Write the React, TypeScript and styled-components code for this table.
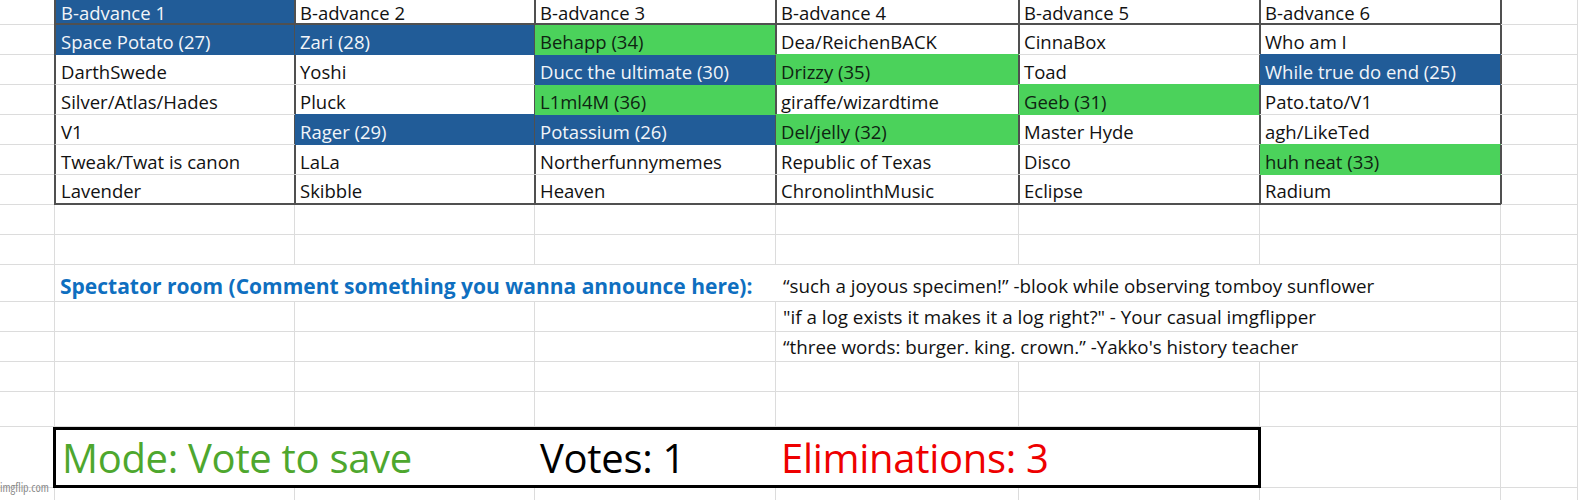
import React from "react";
import styled, { createGlobalStyle } from "styled-components";

const GlobalStyle = createGlobalStyle`
	html, body {
		margin: 0;
		padding: 0;
		background: #ffffff;
		overflow: hidden;
	}
	body {
		font-family: "Open Sans", "Noto Sans", sans-serif;
	}
`;

const BLUE = "#215c98";
const GREEN = "#4bd25b";
const GRID = "#dcdcdc";
const EDGE = "#505050";

type Fill = "b" | "g" | undefined;

const fillColor = (f: Fill) => (f === "b" ? BLUE : f === "g" ? GREEN : undefined);

const Page = styled.div`
	position: relative;
	width: 1578px;
	height: 500px;
	overflow: hidden;
`;

const Sheet = styled.div`
	display: grid;
	grid-template-columns: 55px 240px 240px 241px 243px 241px 241px 1fr;
	grid-template-rows: repeat(9, 30px) 37px 30px 30px 30px 35px 61px 30px;
	margin-top: -5px;
`;

const Cell = styled.div<{ $span?: number }>`
	box-sizing: border-box;
	grid-column: span ${p => p.$span ?? 1};
	border-right: 1px solid ${GRID};
	border-bottom: 1px solid ${GRID};
`;

const TableCell = styled.div<{ $fill: Fill; $below: Fill; $head: boolean; $last: boolean; $first: boolean }>`
	box-sizing: border-box;
	display: flex;
	align-items: center;
	padding: ${p => (p.$head ? "6px" : "3px")} 0 0 5px;
	font-size: 18.5px;
	line-height: 21px;
	white-space: nowrap;
	overflow: hidden;
	background: ${p => fillColor(p.$fill) ?? "transparent"};
	color: ${p => (p.$fill === "b" ? "#f2f5f9" : p.$fill === "g" ? "#0f2412" : "#111")};
	border-right: 2px solid ${EDGE};
	border-left: ${p => (p.$first ? `2px solid ${EDGE}` : "none")};
	margin-left: ${p => (p.$first ? "-1px" : "0")};
	border-bottom: ${p =>
		p.$head || p.$last
			? `2px solid ${EDGE}`
			: `1px solid ${fillColor(p.$fill) ?? fillColor(p.$below) ?? GRID}`};
	margin-right: -1px;
`;

const SpectatorCell = styled(Cell)`
	display: flex;
	align-items: flex-end;
	padding: 0 0 1px 5px;
	border-right: none;
	white-space: nowrap;
	color: #0f6fc0;
	font-weight: 700;
	font-size: 21px;
`;

const QuoteCell = styled(Cell)<{ $tall?: boolean }>`
	display: flex;
	align-items: flex-end;
	padding: 0 0 ${p => (p.$tall ? "2px" : "1px")} 7px;
	white-space: nowrap;
	color: #111;
	font-size: 18.8px;
`;

const StatusBox = styled.div`
	grid-column: span 5;
	box-sizing: border-box;
	margin: 0 -1px 0 -2px;
	border: 3px solid #000;
	display: grid;
	grid-template-columns: 238px 240px 241px 1fr;
	align-items: center;
	font-size: 40px;
	letter-spacing: -0.3px;
	background: #fff;
	position: relative;
	z-index: 1;
`;

const Stat = styled.div<{ $color: string; $col: number }>`
	grid-column: ${p => p.$col};
	color: ${p => p.$color};
	padding-left: 6px;
	white-space: nowrap;
`;

const Watermark = styled.div`
	position: absolute;
	left: 0;
	bottom: 4px;
	font-stretch: 75%;
	font-size: 12px;
	color: #8a8a8a;
	z-index: 2;
`;

const rows: [string, Fill][][] = [
	[["B-advance 1", "b"], ["B-advance 2", undefined], ["B-advance 3", undefined], ["B-advance 4", undefined], ["B-advance 5", undefined], ["B-advance 6", undefined]],
	[["Space Potato (27)", "b"], ["Zari (28)", "b"], ["Behapp (34)", "g"], ["Dea/ReichenBACK", undefined], ["CinnaBox", undefined], ["Who am I", undefined]],
	[["DarthSwede", undefined], ["Yoshi", undefined], ["Ducc the ultimate (30)", "b"], ["Drizzy (35)", "g"], ["Toad", undefined], ["While true do end (25)", "b"]],
	[["Silver/Atlas/Hades", undefined], ["Pluck", undefined], ["L1ml4M (36)", "g"], ["giraffe/wizardtime", undefined], ["Geeb (31)", "g"], ["Pato.tato/V1", undefined]],
	[["V1", undefined], ["Rager (29)", "b"], ["Potassium (26)", "b"], ["Del/jelly (32)", "g"], ["Master Hyde", undefined], ["agh/LikeTed", undefined]],
	[["Tweak/Twat is canon", undefined], ["LaLa", undefined], ["Northerfunnymemes", undefined], ["Republic of Texas", undefined], ["Disco", undefined], ["huh neat (33)", "g"]],
	[["Lavender", undefined], ["Skibble", undefined], ["Heaven", undefined], ["ChronolinthMusic", undefined], ["Eclipse", undefined], ["Radium", undefined]],
];

const quotes = [
	"\u201csuch a joyous specimen!\u201d -blook while observing tomboy sunflower",
	"\"if a log exists it makes it a log right?\" - Your casual imgflipper",
	"\u201cthree words: burger. king. crown.\u201d -Yakko's history teacher",
];

function blankRow(key: string) {
	return Array.from({ length: 8 }, (_, i) => <Cell key={key + i} />);
}

export default function App() {
	const cells: React.ReactNode[] = [];

	rows.forEach((row, r) => {
		cells.push(<Cell key={`t${r}-0`} />);
		row.forEach(([text, fill], c) => (
			cells.push(
				<TableCell
					key={`t${r}-${c + 1}`}
					$fill={fill}
					$below={rows[r + 1]?.[c]?.[1]}
					$head={r === 0}
					$last={r === rows.length - 1}
					$first={c === 0}
				>
					{text}
				</TableCell>
			)
		));
		cells.push(<Cell key={`t${r}-7`} />);
	});

	cells.push(...blankRow("e1-"), ...blankRow("e2-"));

	// spectator row, first quote alongside it
	cells.push(
		<Cell key="s0" />,
		<SpectatorCell key="s1" $span={3}>Spectator room (Comment something you wanna announce here):</SpectatorCell>,
		<QuoteCell key="s4" $span={3} $tall>{quotes[0]}</QuoteCell>,
		<Cell key="s7" />
	);

	quotes.slice(1).forEach((q, i) => {
		cells.push(
			<Cell key={`q${i}-0`} />,
			<Cell key={`q${i}-1`} />,
			<Cell key={`q${i}-2`} />,
			<Cell key={`q${i}-3`} />,
			<QuoteCell key={`q${i}-4`} $span={3}>{q}</QuoteCell>,
			<Cell key={`q${i}-7`} />
		);
	});

	cells.push(...blankRow("e3-"), ...blankRow("e4-"));

	cells.push(
		<Cell key="m0" />,
		<StatusBox key="m1">
			<Stat $col={1} $color="#4ea72e">Mode: Vote to save</Stat>
			<Stat $col={3} $color="#000">Votes: 1</Stat>
			<Stat $col={4} $color="#ee0000">Eliminations: 3</Stat>
		</StatusBox>,
		<Cell key="m6" />,
		<Cell key="m7" />
	);

	cells.push(...blankRow("e5-"));

	return (
		<Page>
			<GlobalStyle />
			<Sheet>{cells}</Sheet>
			<Watermark>imgflip.com</Watermark>
		</Page>
	);
}
